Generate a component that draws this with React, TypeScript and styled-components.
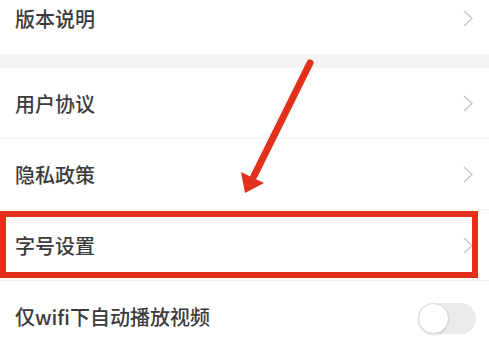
import React from "react";
import styled, { createGlobalStyle } from "styled-components";

const Global = createGlobalStyle`
  html, body { margin: 0; padding: 0; background: #fff; }
  body { width: 489px; height: 345px; overflow: hidden; position: relative; }
`;

const Page = styled.div`
  position: relative;
  width: 489px;
  height: 345px;
  overflow: hidden;
  background: #fff;
  font-family: "Noto Sans CJK SC", "Noto Sans", sans-serif;
`;

const List = styled.div`
  margin-top: -17px;
  display: flex;
  flex-direction: column;
`;

const Group = styled.div`
  display: flex;
  flex-direction: column;
  background: #fff;
`;

const Gap = styled.div`
  height: 14px;
  background: #f4f4f4;
`;

const Row = styled.div<{ $divider?: boolean }>`
  height: 71px;
  box-sizing: border-box;
  display: flex;
  align-items: center;
  justify-content: space-between;
  padding: 0 16px 0 15px;
  border-bottom: 1px solid ${(p) => (p.$divider ? "#efefef" : "transparent")};
`;

const Label = styled.span`
  font-size: 20px;
  font-weight: 500;
  color: #3c3c3c;
  letter-spacing: 0px;
`;

const Chevron = () => (
  <svg width="10" height="17" viewBox="0 0 10 17">
    <polyline points="1,1 9,8.5 1,16" fill="none" stroke="#c6c6c6" strokeWidth="1.4" />
  </svg>
);

const Toggle = styled.div`
  width: 58px;
  height: 31px;
  border-radius: 16px;
  background: #ebebeb;
  position: relative;
  margin-right: -3px;
  margin-top: 5px;
`;

const Knob = styled.div`
  position: absolute;
  left: 0;
  top: 0;
  width: 31px;
  height: 31px;
  box-sizing: border-box;
  border-radius: 50%;
  background: #fff;
  border: 1.5px solid #d8d8d8;
  box-shadow: 0 1px 2px rgba(0, 0, 0, 0.12);
`;

const Highlight = styled.div`
  position: absolute;
  left: 0;
  top: 211px;
  width: 478px;
  height: 67px;
  box-sizing: border-box;
  border: 6px solid #e3301c;
  pointer-events: none;
`;

const ArrowLayer = styled.svg`
  position: absolute;
  left: 0;
  top: 0;
  pointer-events: none;
`;

export default function App() {
  return (
    <Page>
      <Global />
      <List>
        <Group>
          <Row>
            <Label>版本说明</Label>
            <Chevron />
          </Row>
        </Group>
        <Gap />
        <Group>
          <Row $divider>
            <Label>用户协议</Label>
            <Chevron />
          </Row>
          <Row $divider>
            <Label>隐私政策</Label>
            <Chevron />
          </Row>
          <Row $divider>
            <Label>字号设置</Label>
            <Chevron />
          </Row>
          <Row>
            <Label>仅wifi下自动播放视频</Label>
            <Toggle>
              <Knob />
            </Toggle>
          </Row>
        </Group>
      </List>
      <Highlight />
      <ArrowLayer width="489" height="345" viewBox="0 0 489 345">
        <line x1="310" y1="63" x2="254" y2="176" stroke="#e3301c" strokeWidth="7" strokeLinecap="round" />
        <polygon points="245,193 241,172 264,183" fill="#e3301c" />
      </ArrowLayer>
    </Page>
  );
}
